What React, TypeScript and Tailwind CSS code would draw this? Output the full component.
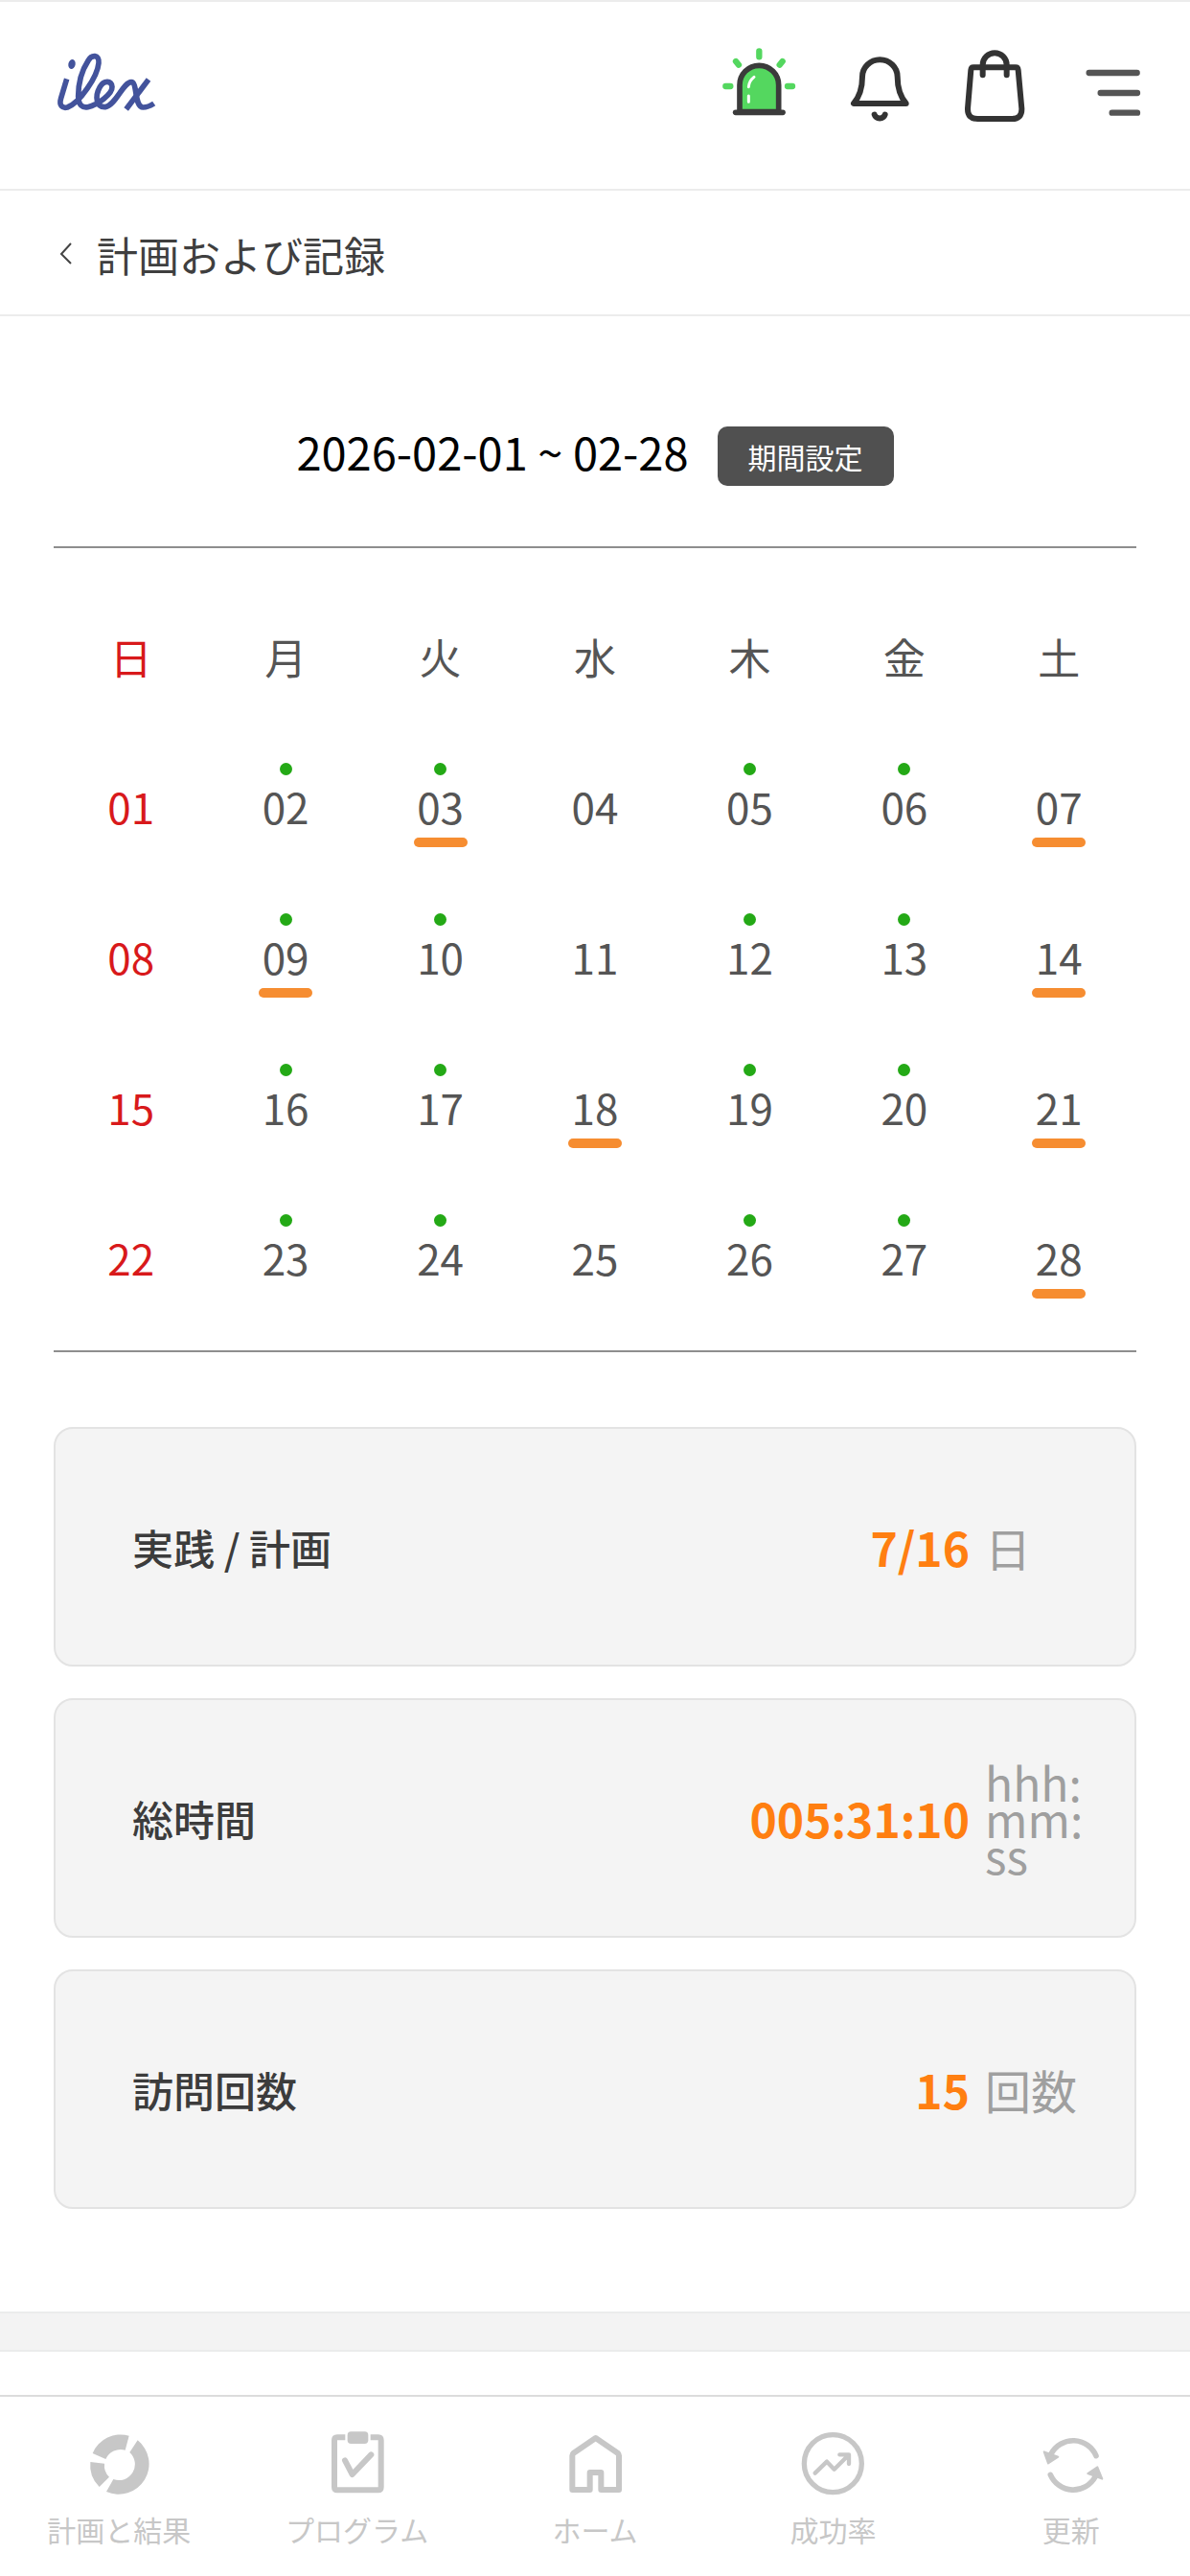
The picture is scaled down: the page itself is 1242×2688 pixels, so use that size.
import type { ReactNode } from "react";

const WEEKDAYS = ["日", "月", "火", "水", "木", "金", "土"];

const WEEKS = [
  ["01", "02", "03", "04", "05", "06", "07"],
  ["08", "09", "10", "11", "12", "13", "14"],
  ["15", "16", "17", "18", "19", "20", "21"],
  ["22", "23", "24", "25", "26", "27", "28"],
];

const PLANNED_COLUMNS = [1, 2, 4, 5];
const VISITED = ["03", "07", "09", "14", "18", "21", "28"];

function Logo() {
  return (
    <svg viewBox="78 72 324 189" className="h-[63px] w-[108px]" fill="none" stroke="#43539c" strokeWidth="17" aria-hidden="true">
      <ellipse cx="135" cy="111" rx="11" ry="15" transform="rotate(12 135 111)" fill="#43539c" stroke="none" />
      <path d="M119 157L101 217C94 240 105 250 121 246C160 232 215 150 219 107C221 80 197 80 186 100C165 132 155 175 155 212C156 240 168 248 185 245C215 238 262 205 261 182C260 160 234 162 223 182C206 212 211 247 240 245C272 240 296 167 321 167C341 167 330 246 358 246C368 246 380 242 392 234" />
      <path d="M375 159L305 252" />
    </svg>
  );
}

function SirenIcon() {
  return (
    <svg viewBox="66 60 234 234" className="size-[78px]" fill="none" strokeLinecap="round" aria-hidden="true">
      <path d="M123 260V176a61 61 0 0 1 122 0V260Z" fill="#54d75f" stroke="#3b3b3b" strokeWidth="17" />
      <path d="M110 262H258" stroke="#3b3b3b" strokeWidth="17" />
      <path d="M184 70V88M111 102L120 113M257 102L248 113M79 180H94M273 180H288" stroke="#54d75f" strokeWidth="19" />
      <path d="M151 182C152 168 159 158 168 151M151 210V229" stroke="#fff" strokeWidth="9" />
    </svg>
  );
}

function BellIcon() {
  return (
    <svg viewBox="464 60 189 234" className="h-[78px] w-[63px]" fill="none" stroke="#333" strokeWidth="18" strokeLinecap="round" strokeLinejoin="round" aria-hidden="true">
      <path d="M476 234H640C620 210 613 184 613 150A55 53 0 0 0 503 150C503 184 496 210 476 234Z" />
      <path d="M541 269C546 284 569 284 574 269" />
    </svg>
  );
}

function BagIcon() {
  return (
    <svg viewBox="104 60 195 234" className="h-[78px] w-[65px]" fill="none" stroke="#333" strokeWidth="18" strokeLinecap="round" strokeLinejoin="round" aria-hidden="true">
      <path d="M134 121H266Q273 121 274 129L285 250Q286 282 255 282H147Q115 282 116 250L126 129Q127 121 134 121Z" />
      <path d="M163 145V113a37 37 0 0 1 75 0V145" />
    </svg>
  );
}

function MenuIcon() {
  return (
    <svg viewBox="472 60 192 234" className="h-[78px] w-[64px]" fill="none" stroke="#555" strokeWidth="19" strokeLinecap="round" aria-hidden="true">
      <path d="M501 138H651M537 201H652M573 263H652" />
    </svg>
  );
}

const NAV: { label: string; icon: ReactNode }[] = [
  {
    label: "計画と結果",
    icon: (
      <svg viewBox="271 171 204 204" className="size-[68px]" fill="currentColor" aria-hidden="true">
        <path d="M405 185A95 95 0 0 0 291 240L332 258A51 51 0 0 1 393 230Z" />
        <path d="M432 199A95 95 0 0 1 334 360L356 321A50 50 0 0 0 407 237Z" />
        <path d="M284 267L328 272A51 51 0 0 0 343 314L312 345A95 95 0 0 1 284 267Z" />
      </svg>
    ),
  },
  {
    label: "プログラム",
    icon: (
      <svg viewBox="1016 171 204 204" className="size-[68px]" fill="none" stroke="currentColor" strokeWidth="18" aria-hidden="true">
        <path d="M1080 190H1055Q1046 190 1046 199V346Q1046 355 1055 355H1183Q1192 355 1192 346V199Q1192 190 1183 190H1159" />
        <rect x="1087" y="172" width="65" height="38" rx="11" fill="currentColor" stroke="none" />
        <path d="M1079 262L1102 306L1161 244" strokeLinecap="round" strokeLinejoin="round" />
      </svg>
    ),
  },
  {
    label: "ホーム",
    icon: (
      <svg viewBox="141 171 204 204" className="size-[68px]" fill="none" stroke="currentColor" strokeWidth="18" strokeLinejoin="round" aria-hidden="true">
        <path d="M172 354V247Q172 242 176 239L245 192L314 239Q318 242 318 247V354H262V300H227V354Z" />
      </svg>
    ),
  },
  {
    label: "成功率",
    icon: (
      <svg viewBox="886 171 204 204" className="size-[68px]" fill="none" stroke="currentColor" strokeLinecap="round" strokeLinejoin="round" aria-hidden="true">
        <circle cx="989" cy="272" r="90" strokeWidth="16" />
        <path d="M933 302L970 266L993 290L1038 245M1010 244H1039V273" strokeWidth="13" />
      </svg>
    ),
  },
  {
    label: "更新",
    icon: (
      <svg viewBox="251 441 204 204" className="size-[68px]" fill="none" stroke="currentColor" strokeWidth="17" strokeLinecap="round" strokeLinejoin="round" aria-hidden="true">
        <path d="M431 518A78 78 0 0 0 290 512M288 577A78 78 0 0 0 428 584" />
        <path d="M268 505L312 521L281 541Z" fill="currentColor" strokeWidth="6" />
        <path d="M435 553L450 590L405 573Z" fill="currentColor" strokeWidth="6" />
      </svg>
    ),
  },
];

function StatCard({ label, value, unit }: { label: string; value: string; unit: ReactNode }) {
  return (
    <section className="flex min-h-[250px] items-center rounded-[20px] border-2 border-[#e3e3e3] bg-[#f4f4f4] pr-[52px] pl-20">
      <h2 className="flex-1 text-[43px] leading-[60px] font-medium text-[#3c3c3c]">{label}</h2>
      <p className="text-[48px] leading-[60px] font-bold text-[#ff7f11]">{value}</p>
      <p className="ml-4 w-[104px] text-[48px] leading-[38px] text-[#9f9f9f]">{unit}</p>
    </section>
  );
}

export default function App() {
  return (
    <div lang="ja" className="flex min-h-screen flex-col bg-white font-['Noto_Sans_CJK_JP','Noto_Sans',sans-serif] text-[#444]">
      <header className="flex h-[199px] items-start justify-between border-t-2 border-b-2 border-[#ececec] pt-12 pr-[51px] pl-14">
        <a href="#" aria-label="ilex" className="mt-1">
          <Logo />
        </a>
        <div className="flex gap-14">
          <button type="button" aria-label="サイレン"><SirenIcon /></button>
          <button type="button" aria-label="通知"><BellIcon /></button>
          <button type="button" aria-label="バッグ"><BagIcon /></button>
          <button type="button" aria-label="メニュー"><MenuIcon /></button>
        </div>
      </header>

      <div className="flex h-[131px] items-center border-b-2 border-[#ececec] pt-0.5 pl-[62px]">
        <button type="button" aria-label="戻る" className="mr-[26px]">
          <svg viewBox="0 0 13 24" className="h-6 w-[13px]" fill="none" stroke="#444" strokeWidth="2" aria-hidden="true">
            <path d="M12 1L2 12L12 22" />
          </svg>
        </button>
        <h1 className="text-[43px] leading-[60px] text-[#3f3f3f]">計画および記録</h1>
      </div>

      <main className="flex-1">
        <div className="mx-14">
          <div className="flex h-[242px] items-center justify-center gap-[30px] border-b-2 border-[#8e8e8e] pt-[52px]">
            <p className="pb-2.5 text-[47px] leading-[60px] text-black">2026-02-01 ~ 02-28</p>
            <button type="button" className="h-[62px] rounded-[10px] bg-[#505050] px-8 text-[30px] leading-[60px] text-white">
              期間設定
            </button>
          </div>

          <div className="border-b-2 border-[#8e8e8e] pb-[15px]">
            <table className="w-full table-fixed text-center text-[44px] leading-[60px] text-[#555]">
              <thead>
                <tr className="h-[194px]">
                  {WEEKDAYS.map((day, i) => (
                    <th key={day} scope="col" className={i === 0 ? "pt-8 font-normal text-[#d8191b]" : "pt-8 font-normal"}>
                      {day}
                    </th>
                  ))}
                </tr>
              </thead>
              <tbody>
                {WEEKS.map((week) => (
                  <tr key={week[0]} className="h-[157px] align-top">
                    {week.map((day, i) => (
                      <td key={day}>
                        <div className="flex flex-col items-center pt-[30px]">
                          <span className={PLANNED_COLUMNS.includes(i) ? "size-[13px] rounded-full bg-[#24a916]" : "size-[13px]"} />
                          <span className={i === 0 ? "mt-0.5 text-[#d8191b]" : "mt-0.5"}>{day}</span>
                          {VISITED.includes(day) && <span className="mt-[3px] h-2.5 w-14 rounded-full bg-[#f68d31]" />}
                        </div>
                      </td>
                    ))}
                  </tr>
                ))}
              </tbody>
            </table>
          </div>

          <div className="mt-[78px] mb-[107px] flex flex-col gap-[33px]">
            <StatCard label="実践 / 計画" value="7/16" unit="日" />
            <StatCard label="総時間" value="005:31:10" unit={<>hhh:<wbr />mm:<wbr />ss</>} />
            <StatCard label="訪問回数" value="15" unit="回数" />
          </div>
        </div>
        <div className="h-[42px] border-y-2 border-[#ebecec] bg-[#f3f3f3]" />
      </main>

      <nav className="sticky bottom-0 grid h-[189px] grid-cols-5 border-t-2 border-[#dcdcdc] bg-white pt-9">
        {NAV.map((item) => (
          <a key={item.label} href="#" className="flex flex-col items-center text-[#c7c7c7]">
            {item.icon}
            <span className="mt-3 text-[30px] leading-[44px]">{item.label}</span>
          </a>
        ))}
      </nav>
    </div>
  );
}
